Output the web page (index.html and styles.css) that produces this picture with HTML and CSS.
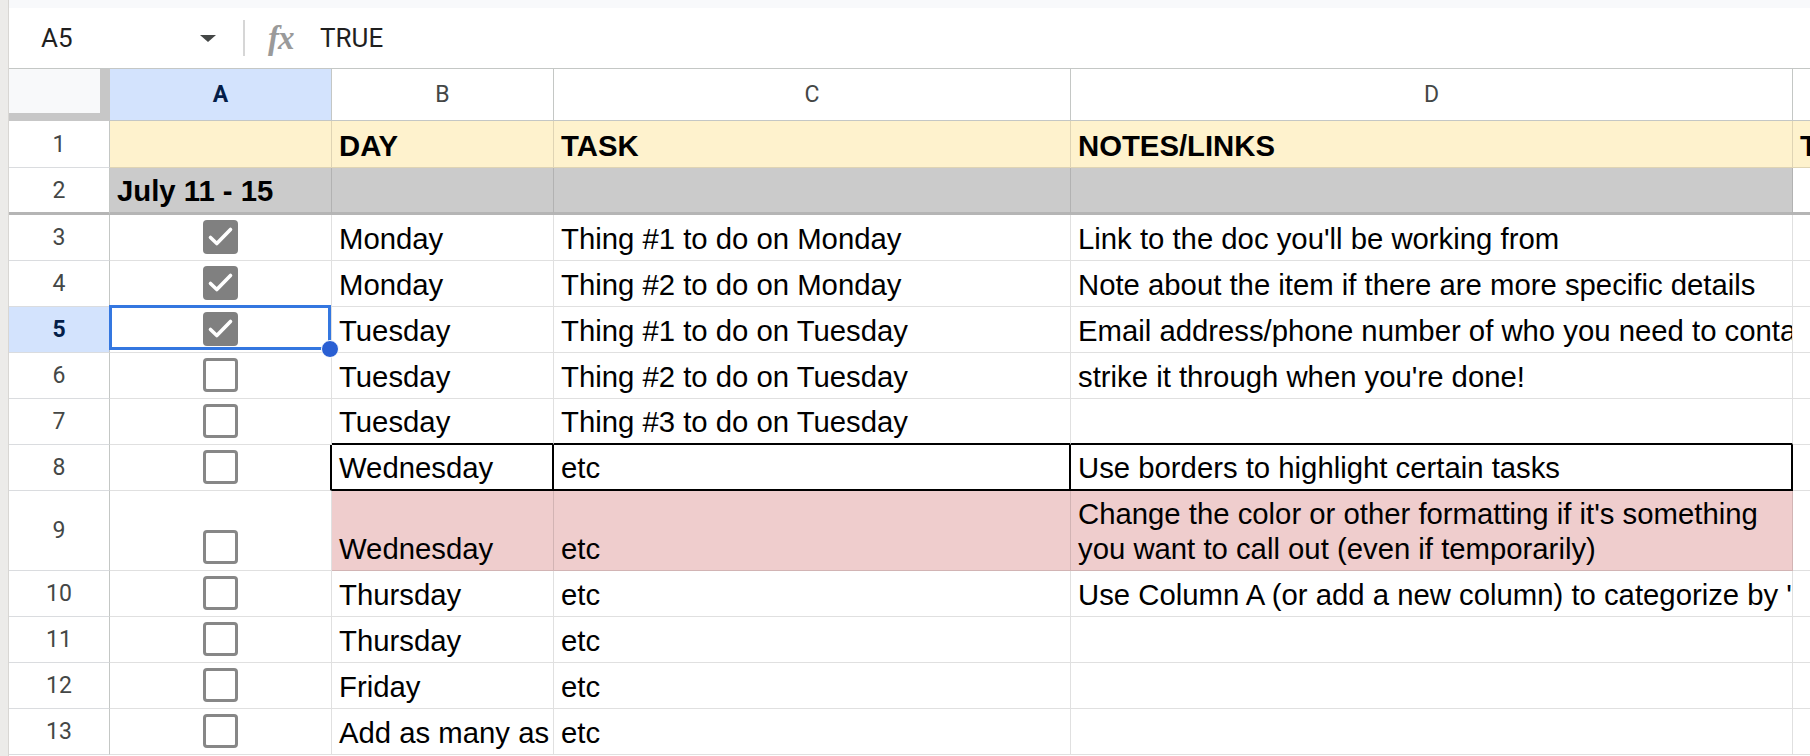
FILE: index.html
```html
<!DOCTYPE html>
<html>
<head>
<meta charset="utf-8">
<link rel="stylesheet" href="styles.css">
</head>
<body>
<div class="app">
  <div class="edge"></div>
  <div class="main">
    <div class="topband"></div>
    <div class="fbar">
      <div class="namebox"><span class="ref">A5</span><span class="caret"></span></div>
      <div class="divider"></div>
      <span class="fx">fx</span>
      <span class="fval">TRUE</span>
    </div>
    <div class="sheet">
      <!-- header row -->
      <div class="corner"></div>
      <div class="ch selh">A</div>
      <div class="ch">B</div>
      <div class="ch">C</div>
      <div class="ch">D</div>
      <div class="ch">E</div>

      <!-- row 1 -->
      <div class="rh">1</div>
      <div class="c y"></div>
      <div class="c y"><span>DAY</span></div>
      <div class="c y"><span>TASK</span></div>
      <div class="c y"><span>NOTES/LINKS</span></div>
      <div class="c y"><span>TIME</span></div>

      <!-- row 2 -->
      <div class="rh frz">2</div>
      <div class="c g frz"><span>July 11 - 15</span></div>
      <div class="c g frz"></div>
      <div class="c g frz"></div>
      <div class="c g frz"></div>
      <div class="c frz"></div>

      <!-- row 3 -->
      <div class="rh">3</div>
      <div class="c cb"><span class="box on"><svg viewBox="0 0 35 34" width="35" height="34"><path d="M7.5 17.5 L13.8 23.5 L27.5 9.5" fill="none" stroke="#fff" stroke-width="3.6" stroke-linecap="round" stroke-linejoin="round"/></svg></span></div>
      <div class="c"><span>Monday</span></div>
      <div class="c"><span>Thing #1 to do on Monday</span></div>
      <div class="c"><span>Link to the doc you'll be working from</span></div>
      <div class="c"></div>

      <!-- row 4 -->
      <div class="rh">4</div>
      <div class="c cb"><span class="box on"><svg viewBox="0 0 35 34" width="35" height="34"><path d="M7.5 17.5 L13.8 23.5 L27.5 9.5" fill="none" stroke="#fff" stroke-width="3.6" stroke-linecap="round" stroke-linejoin="round"/></svg></span></div>
      <div class="c"><span>Monday</span></div>
      <div class="c"><span>Thing #2 to do on Monday</span></div>
      <div class="c"><span>Note about the item if there are more specific details</span></div>
      <div class="c"></div>

      <!-- row 5 -->
      <div class="rh selh">5</div>
      <div class="c cb active"><span class="box on"><svg viewBox="0 0 35 34" width="35" height="34"><path d="M7.5 17.5 L13.8 23.5 L27.5 9.5" fill="none" stroke="#fff" stroke-width="3.6" stroke-linecap="round" stroke-linejoin="round"/></svg></span><span class="sel"><span class="handle"></span></span></div>
      <div class="c"><span>Tuesday</span></div>
      <div class="c"><span>Thing #1 to do on Tuesday</span></div>
      <div class="c"><span>Email address/phone number of who you need to contact</span></div>
      <div class="c"></div>

      <!-- row 6 -->
      <div class="rh">6</div>
      <div class="c cb"><span class="box"></span></div>
      <div class="c"><span>Tuesday</span></div>
      <div class="c"><span>Thing #2 to do on Tuesday</span></div>
      <div class="c"><span>strike it through when you're done!</span></div>
      <div class="c"></div>

      <!-- row 7 -->
      <div class="rh">7</div>
      <div class="c cb"><span class="box"></span></div>
      <div class="c bt"><span>Tuesday</span></div>
      <div class="c bt"><span>Thing #3 to do on Tuesday</span></div>
      <div class="c bt"></div>
      <div class="c"></div>

      <!-- row 8 -->
      <div class="rh">8</div>
      <div class="c cb bl"><span class="box"></span></div>
      <div class="c bx"><span>Wednesday</span></div>
      <div class="c bx"><span>etc</span></div>
      <div class="c bx"><span>Use borders to highlight certain tasks</span></div>
      <div class="c"></div>

      <!-- row 9 -->
      <div class="rh">9</div>
      <div class="c cb"><span class="box"></span></div>
      <div class="c p"><span>Wednesday</span></div>
      <div class="c p"><span>etc</span></div>
      <div class="c p wrap"><span>Change the color or other formatting if it's something you want to call out (even if temporarily)</span></div>
      <div class="c"></div>

      <!-- row 10 -->
      <div class="rh">10</div>
      <div class="c cb"><span class="box"></span></div>
      <div class="c"><span>Thursday</span></div>
      <div class="c"><span>etc</span></div>
      <div class="c"><span>Use Column A (or add a new column) to categorize by 'type'</span></div>
      <div class="c"></div>

      <!-- row 11 -->
      <div class="rh">11</div>
      <div class="c cb"><span class="box"></span></div>
      <div class="c"><span>Thursday</span></div>
      <div class="c"><span>etc</span></div>
      <div class="c"></div>
      <div class="c"></div>

      <!-- row 12 -->
      <div class="rh">12</div>
      <div class="c cb"><span class="box"></span></div>
      <div class="c"><span>Friday</span></div>
      <div class="c"><span>etc</span></div>
      <div class="c"></div>
      <div class="c"></div>

      <!-- row 13 -->
      <div class="rh">13</div>
      <div class="c cb"><span class="box"></span></div>
      <div class="c"><span>Add as many as</span></div>
      <div class="c"><span>etc</span></div>
      <div class="c"></div>
      <div class="c"></div>
    </div>
  </div>
</div>
</body>
</html>
```
FILE: styles.css
```css
* { box-sizing: border-box; }
html, body { margin: 0; padding: 0; }
body {
  width: 1810px;
  height: 756px;
  overflow: hidden;
  background: #fff;
  font-family: "Liberation Sans", Arial, sans-serif;
}
.app { display: flex; height: 756px; }
.edge {
  width: 9px;
  flex: none;
  background: #ecebe9;
  border-right: 1px solid #d8d6d3;
}
.main {
  flex: 1;
  min-width: 0;
  display: flex;
  flex-direction: column;
  overflow: hidden;
}
.topband { height: 8px; flex: none; background: #f8f9fb; }
.fbar {
  height: 61px;
  flex: none;
  display: flex;
  align-items: center;
  border-bottom: 1px solid #c4c7c5;
  font-family: Roboto, "Liberation Sans", sans-serif;
  font-size: 26px;
  color: #1f1f1f;
}
.namebox {
  width: 223px;
  display: flex;
  align-items: center;
  justify-content: space-between;
  padding-left: 32px;
  padding-right: 16px;
}
.caret {
  width: 0;
  height: 0;
  border-left: 8px solid transparent;
  border-right: 8px solid transparent;
  border-top: 7px solid #444746;
}
.divider { width: 2px; height: 36px; background: #d6d6d6; margin-left: 11px; }
.fx {
  margin-left: 23px;
  width: 32px;
  font-family: "Liberation Serif", serif;
  font-style: italic;
  font-weight: bold;
  font-size: 33px;
  color: #9a9a9a;
  letter-spacing: -1px;
}
.fval { margin-left: 20px; }

.sheet {
  flex: none;
  display: grid;
  grid-template-columns: 101px 222px 222px 517px 722px 200px;
  grid-template-rows: 52px 47px 47px repeat(6, 46px) 80px repeat(4, 46px);
}
.corner {
  background: #f8f9fa;
  border-right: 10px solid #c7c7c7;
  border-bottom: 8px solid #c7c7c7;
}
.ch {
  display: flex;
  align-items: center;
  justify-content: center;
  font-family: Roboto, "Liberation Sans", sans-serif;
  font-size: 23px;
  color: #444746;
  background: #fff;
  border-right: 1px solid #c4c7c5;
  border-bottom: 1px solid #c4c7c5;
}
.rh {
  display: flex;
  align-items: center;
  justify-content: center;
  font-family: Roboto, "Liberation Sans", sans-serif;
  font-size: 23px;
  color: #444746;
  background: #fff;
  border-right: 1px solid #c4c7c5;
  border-bottom: 1px solid #dadcdf;
}
.selh { background: #d3e3fd; color: #041e49; font-weight: bold; }

.c {
  display: flex;
  align-items: flex-end;
  padding: 0 7px 4px;
  font-size: 29.3px;
  line-height: 35px;
  color: #000;
  white-space: nowrap;
  overflow: hidden;
  border-right: 1px solid rgba(0, 0, 0, 0.12);
  border-bottom: 1px solid rgba(0, 0, 0, 0.12);
}
.c > span { flex: none; }
.y { background: #fef2cd; font-weight: bold; }
.g { background: #cbcbcb; font-weight: bold; }
.p { background: #efcdcd; }
.frz { border-bottom: 3px solid #b5b5b5; }
.wrap { white-space: normal; }
.wrap > span { flex: 1 1 auto; min-width: 0; }
.bt { border-bottom: 2px solid #000; }
.bx { border-right: 2px solid #000; border-bottom: 2px solid #000; }
.bl { border-right: 2px solid #000; }

.cb { justify-content: center; padding-bottom: 6px; overflow: visible; }
.box {
  display: block;
  width: 35px;
  height: 34px;
  border: 3px solid #878787;
  border-radius: 4px;
}
.box.on { border: 0; background: #808080; }
.box svg { display: block; }

.active { position: relative; }
.sel {
  position: absolute;
  top: -2px;
  left: -1px;
  right: 0;
  bottom: 2px;
  border: 3px solid #3477e0;
  z-index: 5;
}
.handle {
  position: absolute;
  right: -11px;
  bottom: -11px;
  width: 18px;
  height: 18px;
  border-radius: 50%;
  background: #2a5fd3;
  border: 1.5px solid #fff;
}
```
